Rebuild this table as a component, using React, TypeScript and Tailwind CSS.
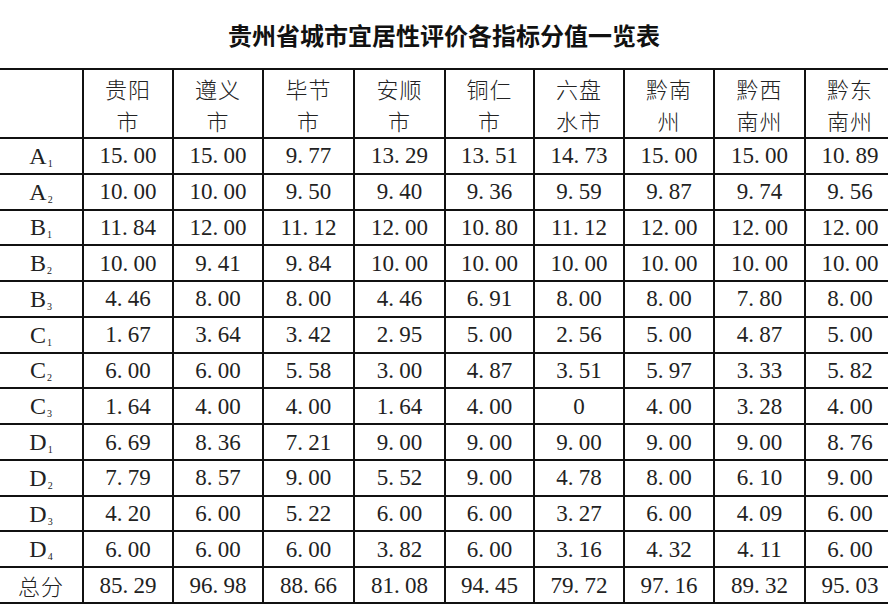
import React from "react";

const headers: [string, string][] = [
  ["贵阳", "市"],
  ["遵义", "市"],
  ["毕节", "市"],
  ["安顺", "市"],
  ["铜仁", "市"],
  ["六盘", "水市"],
  ["黔南", "州"],
  ["黔西", "南州"],
  ["黔东", "南州"],
];

const rows: [string, string, string[]][] = [
  ["A", "1", ["15.00", "15.00", "9.77", "13.29", "13.51", "14.73", "15.00", "15.00", "10.89"]],
  ["A", "2", ["10.00", "10.00", "9.50", "9.40", "9.36", "9.59", "9.87", "9.74", "9.56"]],
  ["B", "1", ["11.84", "12.00", "11.12", "12.00", "10.80", "11.12", "12.00", "12.00", "12.00"]],
  ["B", "2", ["10.00", "9.41", "9.84", "10.00", "10.00", "10.00", "10.00", "10.00", "10.00"]],
  ["B", "3", ["4.46", "8.00", "8.00", "4.46", "6.91", "8.00", "8.00", "7.80", "8.00"]],
  ["C", "1", ["1.67", "3.64", "3.42", "2.95", "5.00", "2.56", "5.00", "4.87", "5.00"]],
  ["C", "2", ["6.00", "6.00", "5.58", "3.00", "4.87", "3.51", "5.97", "3.33", "5.82"]],
  ["C", "3", ["1.64", "4.00", "4.00", "1.64", "4.00", "0", "4.00", "3.28", "4.00"]],
  ["D", "1", ["6.69", "8.36", "7.21", "9.00", "9.00", "9.00", "9.00", "9.00", "8.76"]],
  ["D", "2", ["7.79", "8.57", "9.00", "5.52", "9.00", "4.78", "8.00", "6.10", "9.00"]],
  ["D", "3", ["4.20", "6.00", "5.22", "6.00", "6.00", "3.27", "6.00", "4.09", "6.00"]],
  ["D", "4", ["6.00", "6.00", "6.00", "3.82", "6.00", "3.16", "4.32", "4.11", "6.00"]],
];

const totals = ["85.29", "96.98", "88.66", "81.08", "94.45", "79.72", "97.16", "89.32", "95.03"];

const cell =
  "flex items-center justify-center border-r-2 border-b-2 border-[#111]";

function Num({ v }: { v: string }) {
  const parts = v.split(".");
  return (
    <span className="font-['Liberation_Serif',serif] text-[23px] leading-none text-[#222]">
      {parts[0]}
      {parts.length > 1 && (
        <>
          <span className="inline-block w-[11px] text-left">.</span>
          {parts[1]}
        </>
      )}
    </span>
  );
}

export default function App() {
  return (
    <div className="w-[888px] h-[605px] overflow-hidden bg-white">
      <div className="h-[68px] flex items-center justify-center pt-[1px]">
        <h1 className="font-['Noto_Sans_CJK_SC',sans-serif] font-bold text-[24px] text-[#111]">
          贵州省城市宜居性评价各指标分值一览表
        </h1>
      </div>
      <div className="w-[896px] grid grid-cols-[84px_90px_90px_91px_91px_89px_90px_90px_91px_90px] grid-rows-[69px_repeat(13,35.77px)] border-t-2 border-[#111]">
        <div className={cell}></div>
        {headers.map(([a, b], i) => (
          <div key={i} className={cell + " flex-col"}>
            <span className="font-['Noto_Sans_CJK_SC',sans-serif] font-light text-[22px] leading-[32px] text-[#222] tracking-[1px]">
              {a}
            </span>
            <span className="font-['Noto_Sans_CJK_SC',sans-serif] font-light text-[22px] leading-[32px] text-[#222] tracking-[1px]">
              {b}
            </span>
          </div>
        ))}
        {rows.map(([letter, sub, vals], r) => (
          <React.Fragment key={r}>
            <div className={cell}>
              <span className="font-['Liberation_Serif',serif] text-[24px] leading-none text-[#222]">
                {letter}
                <sub className="text-[10px] relative top-[3px] ml-[1px]">{sub}</sub>
              </span>
            </div>
            {vals.map((v, i) => (
              <div key={i} className={cell}>
                <Num v={v} />
              </div>
            ))}
          </React.Fragment>
        ))}
        <div className={cell}>
          <span className="font-['Noto_Sans_CJK_SC',sans-serif] font-light text-[22px] text-[#222] tracking-[1px]">
            总分
          </span>
        </div>
        {totals.map((v, i) => (
          <div key={i} className={cell}>
            <Num v={v} />
          </div>
        ))}
      </div>
    </div>
  );
}
